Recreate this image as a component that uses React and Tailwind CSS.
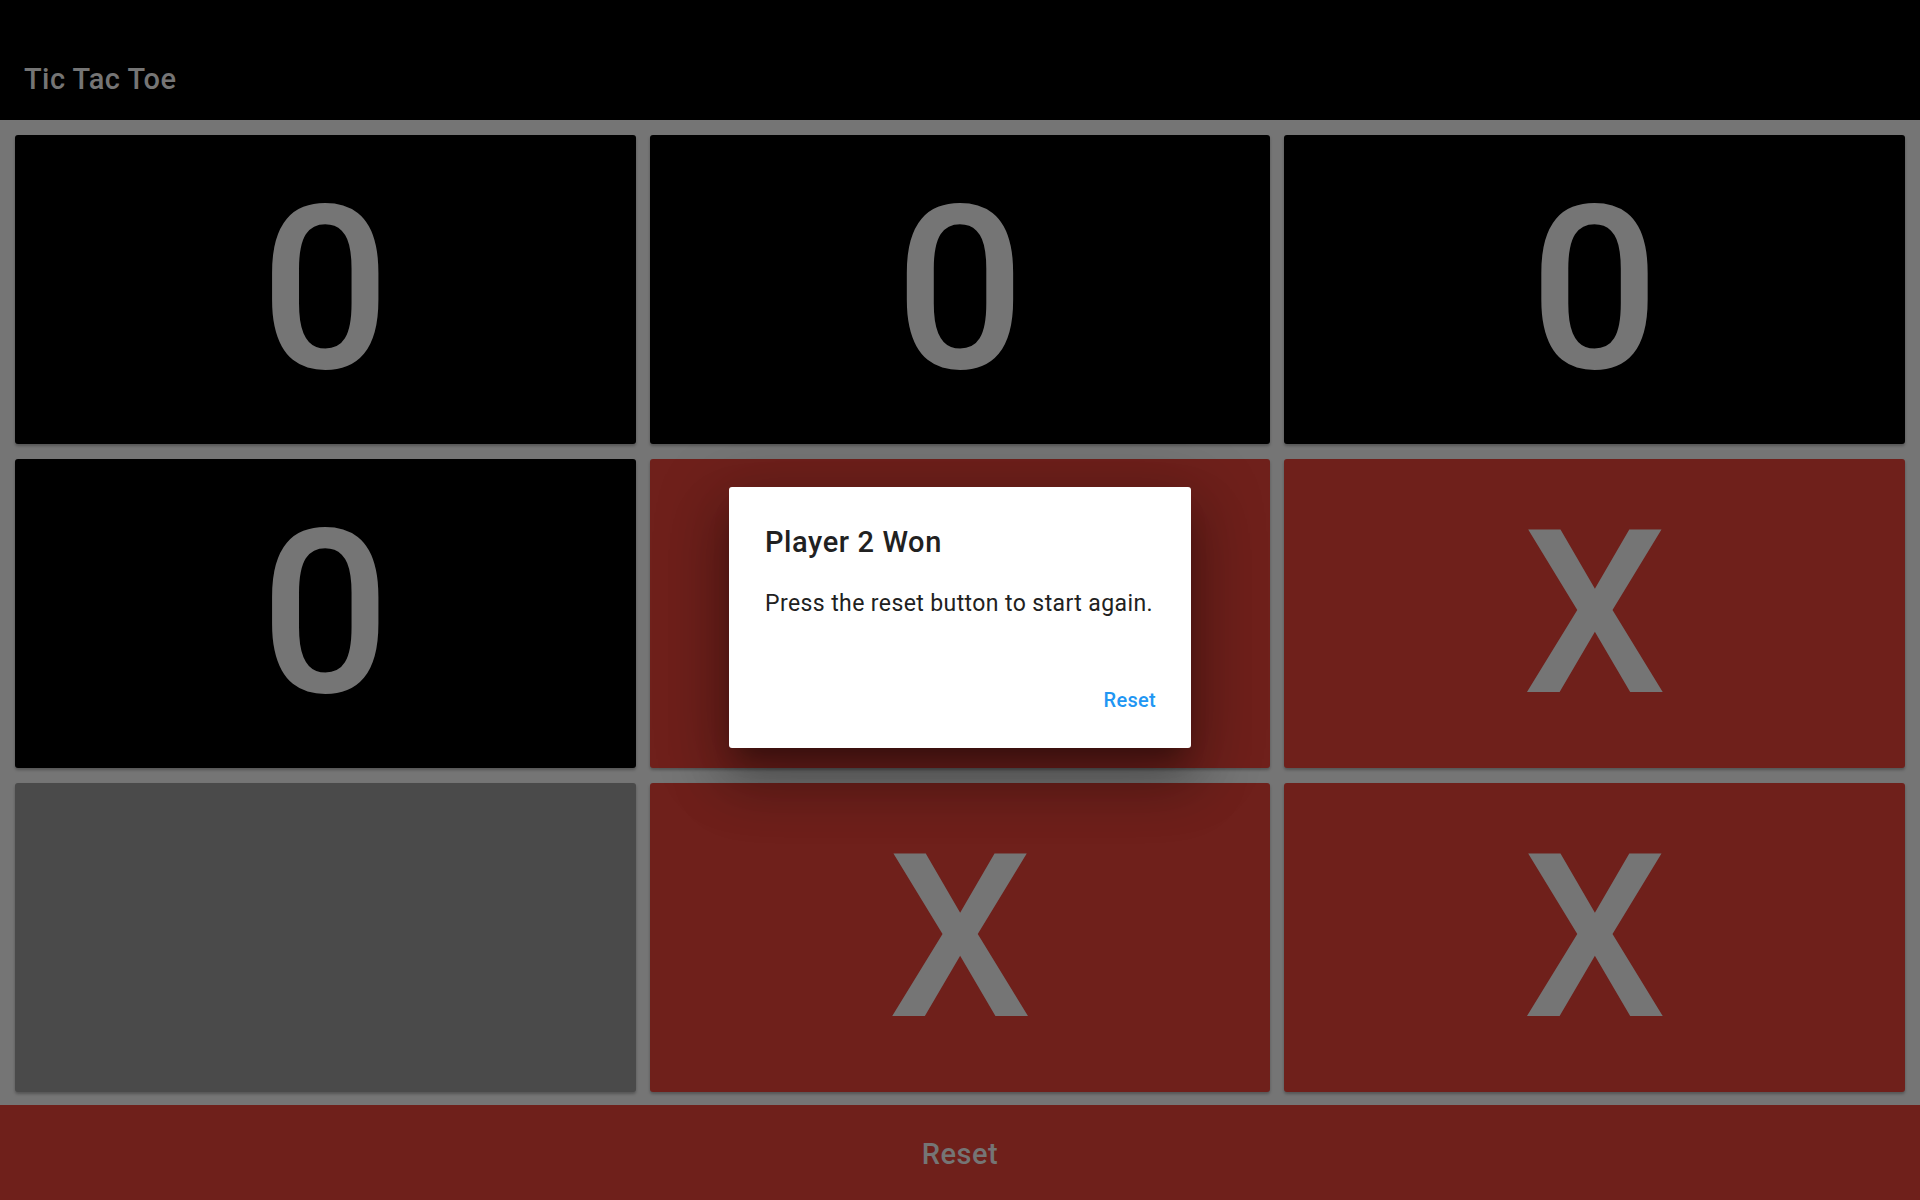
const board = [
  { v: '0', bg: 'bg-black' },
  { v: '0', bg: 'bg-black' },
  { v: '0', bg: 'bg-black' },
  { v: '0', bg: 'bg-black' },
  { v: '', bg: 'bg-[#6f201b]' }, // covered by the dialog
  { v: 'X', bg: 'bg-[#6f201b]' },
  { v: '', bg: 'bg-[#4a4a4a]' },
  { v: 'X', bg: 'bg-[#6f201b]' },
  { v: 'X', bg: 'bg-[#6f201b]' },
]

function Cell({ value, bg }) {
  return (
    <div className={`flex items-center justify-center rounded-[3px] shadow-[0_2px_3px_rgba(0,0,0,0.28)] ${bg}`}>
      <span className="text-[228px] leading-none font-medium text-[#757575]">{value}</span>
    </div>
  )
}

export default function App() {
  return (
    <div
      className="relative flex h-screen w-full flex-col overflow-hidden bg-[#757575]"
      style={{ fontFamily: 'Roboto, "Liberation Sans", sans-serif' }}
    >
      {/* App bar */}
      <header className="h-[120px] shrink-0 bg-black pl-[24px] pt-[62px]">
        <h1 className="text-[29px] font-medium leading-[34px] tracking-[0.45px] text-[#757575]">Tic Tac Toe</h1>
      </header>

      {/* Board */}
      <main className="grid min-h-0 flex-1 grid-cols-3 grid-rows-3 gap-x-[14px] gap-y-[15px] px-[15px] pb-[13px] pt-[15px]">
        {board.map((c, i) => (
          <Cell key={i} value={c.v} bg={c.bg} />
        ))}
      </main>

      {/* Bottom reset */}
      <button className="flex h-[95px] w-full shrink-0 items-center justify-center bg-[#6f201b] pt-[4px]">
        <span className="text-[29px] font-medium tracking-[0.5px] text-[#757575]">Reset</span>
      </button>

      {/* Dialog */}
      <div className="absolute inset-x-0 bottom-0 top-[35px] flex items-center justify-center">
        <div className="flex h-[261px] w-[462px] flex-col rounded-[3px] bg-white pl-[36px] pr-[35px] pt-[38px] shadow-[0_35px_55px_5px_rgba(0,0,0,0.22),0_13px_67px_12px_rgba(0,0,0,0.18),0_16px_22px_-10px_rgba(0,0,0,0.3)]">
          <h2 className="text-[29px] font-medium leading-[34px] tracking-[0.6px] text-[#212121]">Player 2 Won</h2>
          <p className="mt-[31px] whitespace-nowrap text-[23px] leading-[27px] tracking-[0.4px] text-[#212121]">
            Press the reset button to start again.
          </p>
          <div className="mt-[72px] flex justify-end">
            <button className="text-[20px] font-medium leading-[23px] tracking-[0.3px] text-[#2196f3]">Reset</button>
          </div>
        </div>
      </div>
    </div>
  )
}
